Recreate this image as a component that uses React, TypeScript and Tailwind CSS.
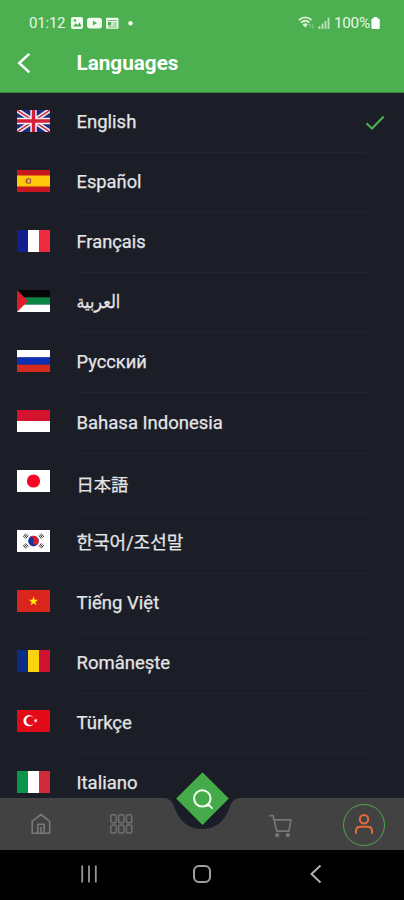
import React from "react";

const star = "M0 -1 .2245 -.309 .951 -.309 .363 .118 .588 .809 0 .382 -.588 .809 -.363 .118 -.951 -.309 -.2245 -.309Z";

function Stripes({ colors, vertical }: { colors: string[]; vertical?: boolean }) {
  const n = colors.length;
  return (
    <>
      {colors.map((c, i) =>
        vertical ? (
          <rect key={i} x={(33 * i) / n} y="0" width={33 / n + 0.1} height="22" fill={c} />
        ) : (
          <rect key={i} x="0" y={(22 * i) / n} width="33" height={22 / n + 0.1} fill={c} />
        )
      )}
    </>
  );
}

const flags: Record<string, React.ReactNode> = {
  gb: (
    <>
      <rect width="33" height="22" fill="#1c2a83" />
      <path d="M0 0L33 22M33 0L0 22" stroke="#f1eef3" strokeWidth="4.6" />
      <path d="M0 0L33 22M33 0L0 22" stroke="#d2304a" strokeWidth="1.5" />
      <path d="M16.5 0V22M0 11H33" stroke="#f6eef1" strokeWidth="6.4" />
      <path d="M16.5 0V22M0 11H33" stroke="#d2203a" strokeWidth="3.4" />
    </>
  ),
  es: (
    <>
      <rect width="33" height="22" fill="#c8171e" />
      <rect y="5.5" width="33" height="11" fill="#ffc80a" />
      <path d="M8.5 9.5Q11 6.5 13.8 9V13.5Q11 15 8.5 12.5Z" fill="#bd7429" />
      <circle cx="11.8" cy="11" r="1.5" fill="#d9b690" />
      <path d="M9.4 9.5V13M13.6 9V13" stroke="#8b4b28" strokeWidth="0.8" />
    </>
  ),
  fr: <Stripes vertical colors={["#10208f", "#fff", "#ef2b3f"]} />,
  ps: (
    <>
      <Stripes colors={["#050505", "#0a8345", "#fff"]} />
      <path d="M0 0L11 11L0 22Z" fill="#df1c2c" />
    </>
  ),
  ru: <Stripes colors={["#fff", "#1030b4", "#d52b1e"]} />,
  id: <Stripes colors={["#d4142e", "#fff"]} />,
  jp: (
    <>
      <rect width="33" height="22" fill="#fff" />
      <circle cx="16.5" cy="11" r="6.6" fill="#fb0524" />
    </>
  ),
  kr: (
    <>
      <rect width="33" height="22" fill="#fff" />
      <g transform="rotate(25 16.5 11)">
        <circle cx="16.5" cy="11" r="5.3" fill="#12349b" />
        <path d="M11.2 11A5.3 5.3 0 0 1 21.8 11A2.65 2.65 0 0 1 16.5 11A2.65 2.65 0 0 0 11.2 11" fill="#d9202f" />
      </g>
      <g stroke="#333" strokeWidth="1">
        <path d="M6.3 6.8L8.8 3.6M7.5 7.7L10 4.5M8.7 8.6L11.2 5.4" />
        <path d="M26.7 6.8L24.2 3.6M25.5 7.7L23 4.5M24.3 8.6L21.8 5.4" />
        <path d="M6.3 15.2L8.8 18.4M7.5 14.3L10 17.5M8.7 13.4L11.2 16.6" />
        <path d="M26.7 15.2L24.2 18.4M25.5 14.3L23 17.5M24.3 13.4L21.8 16.6" />
      </g>
    </>
  ),
  vn: (
    <>
      <rect width="33" height="22" fill="#da251d" />
      <path d={star} transform="translate(16.5 11.3) scale(5)" fill="#ffef00" />
    </>
  ),
  ro: <Stripes vertical colors={["#0b2c85", "#fcd30d", "#ce1430"]} />,
  tr: (
    <>
      <rect width="33" height="22" fill="#e30a17" />
      <circle cx="12" cy="10.7" r="5.6" fill="#fff" />
      <circle cx="13.6" cy="10.7" r="4.4" fill="#e30a17" />
      <path d={star} transform="translate(18.7 10.7) rotate(-18) scale(2.4)" fill="#fff" />
    </>
  ),
  it: <Stripes vertical colors={["#0b9548", "#fff", "#d12b3a"]} />,
};

const languages = [
  { flag: "gb", name: "English", cls: "text-[18.5px] pt-px" },
  { flag: "es", name: "Español", cls: "text-[18.3px] pb-px" },
  { flag: "fr", name: "Français", cls: "text-[18.3px] pb-[2px]" },
  { flag: "ps", name: "العربية", cls: "text-[16px] pb-[2px] scale-y-115 font-['DejaVu_Sans',sans-serif]" },
  { flag: "ru", name: "Русский", cls: "text-[18.3px] pb-[2px]" },
  { flag: "id", name: "Bahasa Indonesia", cls: "text-[18.5px] pt-px" },
  { flag: "jp", name: "日本語", cls: "text-[17.3px] pt-[5px]" },
  { flag: "kr", name: "한국어/조선말", cls: "text-[18px] pb-px" },
  { flag: "vn", name: "Tiếng Việt", cls: "text-[18.5px] pt-px" },
  { flag: "ro", name: "Românește", cls: "text-[18.5px] pt-px" },
  { flag: "tr", name: "Türkçe", cls: "text-[18.5px] pt-px" },
  { flag: "it", name: "Italiano", cls: "text-[18.5px] pt-px" },
];

function StatusBar() {
  return (
    <div className="flex h-[46px] items-center pl-[29px] pr-[24px] text-[#e9f8e7]">
      <span className="w-[42px] text-[15px] leading-none tracking-[-0.2px]">01:12</span>
      <svg width="64" height="14" viewBox="0 0 64 14" fill="#effbed">
        <rect x="0" y="1" width="12" height="12" rx="2" />
        <path d="M2 10.5L4.6 7.3L6.5 9L8.7 6.6L10.5 10.5Z" fill="#4caf50" />
        <circle cx="4" cy="4.5" r="1.2" fill="#4caf50" />
        <rect x="16" y="1.7" width="15" height="10.8" rx="3" />
        <path d="M22 4.8L26 7.1L22 9.4Z" fill="#4caf50" />
        <rect x="35" y="1.7" width="12.5" height="11" rx="1" />
        <path d="M36.2 4.6H46.3M41.7 7H46M41.7 9H46M37 11H46" stroke="#4caf50" strokeWidth="0.8" />
        <rect x="37" y="6" width="3.3" height="3.5" fill="#4caf50" />
        <circle cx="59.5" cy="7.2" r="2.2" />
      </svg>
      <div className="flex-1" />
      <svg className="mr-[4px]" width="32" height="14" viewBox="0 0 32 14" fill="none" stroke="#d8f0d6">
        <path d="M.8 4Q7.2-1.2 13.6 4M3 6.5Q7.2 3 11.4 6.5" strokeWidth="1.8" />
        <path d="M4.5 8.3Q7.2 6 9.9 8.3L7.2 11.8Z" fill="#d8f0d6" stroke="none" />
        <path d="M12 8V12M10.8 9.2L12 8L13.2 9.2M14.7 8V12M13.5 10.8L14.7 12L15.9 10.8" strokeWidth=".7" opacity=".5" />
        <path d="M21.5 10V13M24.5 7.5V13M27.5 5V13M30.5 1.5V13" strokeWidth="1.8" opacity=".8" />
      </svg>
      <span className="w-[37px] pt-px text-[15.3px] leading-none tracking-[-0.3px]">100%</span>
      <svg width="9" height="14" viewBox="0 0 9 14" fill="#fff">
        <path d="M2.6 1H6.4V2.5H7.5Q8.8 2.5 8.8 4V11.5Q8.8 13 7.5 13H1.7Q.4 13 .4 11.5V4Q.4 2.5 1.7 2.5H2.6Z" />
      </svg>
    </div>
  );
}

function TabBar() {
  return (
    <nav className="relative z-10 flex h-[52px] shrink-0 items-center bg-[#424242]">
      <svg className="ml-[31px]" width="20" height="22" viewBox="0 0 20 22" fill="none" stroke="#787878" strokeWidth="1.6" strokeLinejoin="round">
        <path d="M1.2 8.3L10 1.5L18.7 8.3V20.2H1.2ZM6.8 20V11.2H13.2V20M10 14V20" />
      </svg>
      <svg className="ml-[58px]" width="24" height="20" viewBox="0 0 24 20" fill="none" stroke="#6f6f6f" strokeWidth="1.5">
        {[1.8, 9.6, 17.4].map((x) => (
          <g key={x}>
            <rect x={x} y="0.8" width="5.4" height="8" rx="1.8" />
            <rect x={x} y="11" width="5.4" height="8" rx="1.8" />
          </g>
        ))}
      </svg>
      <svg className="ml-[134px] mt-[3px]" width="26" height="24" viewBox="0 0 26 24" fill="none" stroke="#777" strokeWidth="1.7" strokeLinecap="round" strokeLinejoin="round">
        <path d="M3 1.7H6L9.8 17.1H21.8L24 5.8H7" />
        <circle cx="10.2" cy="21.2" r="1.3" fill="#777" />
        <circle cx="20.8" cy="21.2" r="1.3" fill="#777" />
      </svg>
      <div className="ml-[50px] mt-px flex h-[42px] w-[42px] items-center justify-center rounded-full border border-[#4fa553]">
        <svg className="-mt-0.5" width="20" height="22" viewBox="0 0 20 22" fill="none" stroke="#e8693b" strokeWidth="2" strokeLinecap="round">
          <circle cx="10" cy="6.2" r="4.2" />
          <path d="M2 20V18Q2 13.8 6.2 13.8H13.8Q18 13.8 18 18V20" />
        </svg>
      </div>
      <div className="absolute left-[162px] top-[-28px]">
        <svg width="80" height="60" viewBox="0 0 80 60" fill="none">
          <path d="M2 28C8 28 10.5 32 13 39C18 52 27 59 40 59S62 52 67 39C69.5 32 72 28 78 28Z" fill="#1b1d28" />
          <path d="M40.5 1.2L67.7 28.6L40.5 56L13.3 28.6Z" fill="#181a23" />
          <path d="M40.5 2.2L66.9 28.6L40.5 55L14.1 28.6Z" fill="#45aa49" />
          <circle cx="40.3" cy="28.4" r="8.2" stroke="#f4fff3" strokeWidth="2" />
          <path d="M43.5 35.6H47.3L50 38.2M46.3 33.8L50 38.2" stroke="#f4fff3" strokeWidth="1.7" strokeLinecap="round" />
        </svg>
      </div>
    </nav>
  );
}

export default function App() {
  return (
    <div className="flex h-[900px] w-[404px] flex-col overflow-hidden bg-[#1b1e27] font-['Roboto','Noto_Sans_CJK_JP','Noto_Sans_CJK_KR',sans-serif]">
      <header className="h-[93px] shrink-0 border-b border-[#3b8540] bg-[#4caf50]">
        <StatusBar />
        <div className="flex h-[34px] items-center">
          <svg className="ml-[16px]" width="16" height="22" viewBox="0 0 16 22" fill="none" stroke="#fff" strokeWidth="2.5">
            <path d="M13.3 1.8L3.2 11L13.3 20.3" />
          </svg>
          <h1 className="ml-[44.5px] text-[20.7px] font-bold leading-[30px] text-white">Languages</h1>
        </div>
      </header>
      <main className="min-h-0 flex-1 overflow-hidden">
        {languages.map(({ flag, name, cls }, i) => (
          <div key={flag} className="flex h-[60.1px] items-center">
            <svg className="mb-[5px] ml-[17px] shrink-0" width="33" height="22" viewBox="0 0 33 22">
              {flags[flag]}
            </svg>
            <div className="ml-[26.5px] mr-[36px] flex h-full flex-1 items-center border-b border-[#20242c]">
              <span className={`whitespace-nowrap text-[#e4e5e7] [-webkit-text-stroke:0.25px_#e4e5e7] ${cls}`}>{name}</span>
            </div>
            {i === 0 && (
              <svg className="-ml-[38px] mr-[19px]" width="20" height="16" viewBox="0 0 20 16" fill="none" stroke="#4caf50" strokeWidth="2.2">
                <path d="M1.5 8.3L7 13.5L18.7 1.5" />
              </svg>
            )}
          </div>
        ))}
      </main>
      <TabBar />
      <footer className="flex h-[50px] shrink-0 items-center bg-black">
        <svg className="ml-[80px] mb-0.5" width="18" height="18" viewBox="0 0 18 18" stroke="#969696" strokeWidth="1.8">
          <path d="M2.2 .5V17.5M9 .5V17.5M15.8 .5V17.5" />
        </svg>
        <div className="ml-[95px] mb-0.5 h-[18px] w-[18px] rounded-[6px] border-2 border-[#a1a1a1]" />
        <svg className="ml-[98px] mb-0.5" width="13" height="20" viewBox="0 0 13 20" fill="none" stroke="#b0b0b0" strokeWidth="2">
          <path d="M11.5 1.5L2.5 10L11.5 18.5" />
        </svg>
      </footer>
    </div>
  );
}
